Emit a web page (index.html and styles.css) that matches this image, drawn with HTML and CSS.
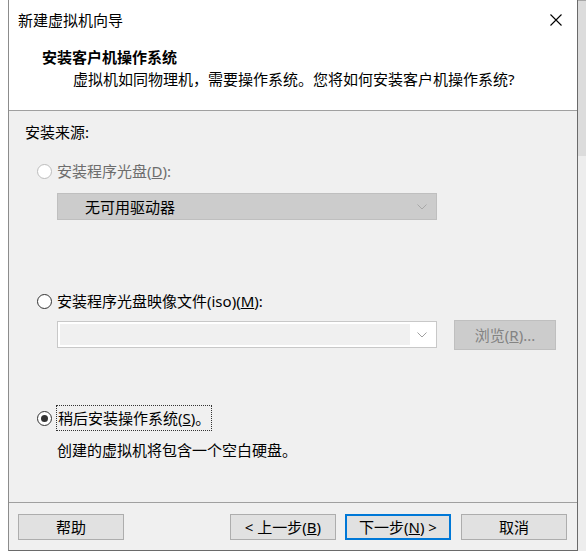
FILE: index.html
```html
<!DOCTYPE html>
<html lang="zh-CN">
<head>
<meta charset="utf-8">
<title>新建虚拟机向导</title>
<link rel="stylesheet" href="styles.css">
</head>
<body>
<div class="screen">
  <div class="window">
    <div class="titlebar">
      <span class="title">新建虚拟机向导</span>
      <span class="close">
        <svg width="12" height="12" viewBox="0 0 12 12"><path d="M0.5 0.5 L11.5 11.5 M11.5 0.5 L0.5 11.5" stroke="#000" stroke-width="1.1" fill="none"/></svg>
      </span>
    </div>
    <div class="header">
      <div class="h-title">安装客户机操作系统</div>
      <div class="h-sub">虚拟机如同物理机，需要操作系统。您将如何安装客户机操作系统?</div>
    </div>
    <div class="content">
      <div class="label">安装来源:</div>
      <div class="radio-row row1 disabled">
        <span class="radio"></span>
        <span class="rtext">安装程序光盘(<u>D</u>):</span>
      </div>
      <div class="combo combo-disabled">
        <span class="combo-text">无可用驱动器</span>
        <span class="chev"><svg width="10" height="6" viewBox="0 0 10 6"><path d="M0.5 0.5 L5 5 L9.5 0.5" stroke="#a8a8a8" fill="none"/></svg></span>
      </div>
      <div class="radio-row row2">
        <span class="radio"></span>
        <span class="rtext">安装程序光盘映像文件(iso)(<u>M</u>):</span>
      </div>
      <div class="iso-row">
        <div class="combo combo-edit">
          <span class="edit-fill"></span>
          <span class="chev"><svg width="10" height="6" viewBox="0 0 10 6"><path d="M0.5 0.5 L5 5 L9.5 0.5" stroke="#a0a0a0" fill="none"/></svg></span>
        </div>
        <div class="browse">浏览(<u>R</u>)...</div>
      </div>
      <div class="radio-row row3">
        <span class="radio checked"></span>
        <span class="rtext focus">稍后安装操作系统(<u>S</u>)。</span>
      </div>
      <div class="note">创建的虚拟机将包含一个空白硬盘。</div>
    </div>
    <div class="footer">
      <div class="btn">帮助</div>
      <div class="spacer"></div>
      <div class="btn">&lt; 上一步(<u>B</u>)</div>
      <div class="btn primary">下一步(<u>N</u>) &gt;</div>
      <div class="btn">取消</div>
    </div>
  </div>
  <div class="backdrop"></div>
</div>
</body>
</html>
```

FILE: styles.css
```css
html, body {
  margin: 0;
  padding: 0;
  background: #ffffff;
}
body {
  width: 586px;
  height: 559px;
  overflow: hidden;
  font-family: "Noto Sans", "Noto Sans CJK SC", sans-serif;
  font-size: 15px;
  color: #000;
}
.screen {
  display: flex;
  padding-left: 8px;
  height: 551px;
}
.window {
  width: 568px;
  height: 550px;
  border-left: 1px solid #8c8c8c;
  border-right: 1px solid #6a6a6a;
  border-bottom: 1px solid #6a6a6a;
  display: flex;
  flex-direction: column;
  background: #f0f0f0;
}
.backdrop {
  flex: 1;
  background: linear-gradient(to bottom, #dcdcdc 0, #dcdcdc 155px, #ededed 155px);
  border-top: 1px solid #a8a8a8;
}
.titlebar {
  height: 40px;
  background: #fff;
  display: flex;
  align-items: center;
  padding-left: 9px;
  padding-right: 15px;
}
.title {
  flex: 1;
  line-height: 20px;
}
.close {
  display: flex;
  align-items: center;
  height: 12px;
}
.header {
  height: 70px;
  background: #fff;
  border-bottom: 1px solid #a0a0a0;
  padding-top: 7px;
  box-sizing: border-box;
  height: 71px;
}
.h-title {
  font-weight: bold;
  line-height: 20px;
  padding-left: 33px;
}
.h-sub {
  line-height: 20px;
  margin-top: 2px;
  padding-left: 64px;
}
.content {
  flex: 1;
  display: flex;
  flex-direction: column;
  align-items: flex-start;
}
.label {
  line-height: 20px;
  margin-top: 11px;
  margin-left: 16px;
}
.radio-row {
  display: flex;
  align-items: center;
  margin-left: 28px;
  height: 20px;
}
.row1 { margin-top: 19px; }
.row2 { margin-top: 71px; }
.row3 { margin-top: 55px; height: 26px; }
.radio {
  width: 13px;
  height: 13px;
  border: 1px solid #333;
  border-radius: 50%;
  background: #fff;
  display: flex;
  align-items: center;
  justify-content: center;
  flex: none;
}
.radio.checked::after {
  content: "";
  width: 7px;
  height: 7px;
  border-radius: 50%;
  background: #333;
}
.rtext {
  margin-left: 5px;
  line-height: 20px;
}
.rtext.focus {
  margin-left: 4px;
  border: 1px dotted #333;
  padding: 1px 1px;
  line-height: 22px;
}
.disabled .radio {
  border-color: #bcbcbc;
}
.disabled .rtext {
  color: #6d6d6d;
}
.combo {
  width: 380px;
  height: 27px;
  box-sizing: border-box;
  margin-left: 48px;
  display: flex;
  align-items: center;
}
.combo-disabled {
  margin-top: 12px;
  background: #cccccc;
  border: 1px solid #bfbfbf;
}
.combo-text {
  flex: 1;
  padding-left: 27px;
  line-height: 20px;
}
.chev {
  width: 24px;
  display: flex;
  justify-content: center;
  padding-right: 2px;
}
.iso-row {
  display: flex;
  align-items: flex-start;
  margin-top: 9px;
}
.combo-edit {
  margin-top: 1px;
  background: #fff;
  border: 1px solid #c8c8c8;
  padding: 2px 0 2px 2px;
  align-items: stretch;
}
.edit-fill {
  flex: 1;
  background: #f0f0f0;
}
.combo-edit .chev {
  align-items: center;
}
.browse {
  margin-left: 17px;
  width: 102px;
  height: 30px;
  box-sizing: border-box;
  background: #cccccc;
  border: 1px solid #bfbfbf;
  color: #838383;
  display: flex;
  align-items: center;
  justify-content: center;
  line-height: 20px;
}
.note {
  margin-top: 9px;
  margin-left: 48px;
  line-height: 20px;
}
.footer {
  height: 48px;
  box-sizing: border-box;
  border-top: 1px solid #a0a0a0;
  padding: 11px 10px 10px 9px;
  display: flex;
  align-items: flex-start;
}
.spacer {
  flex: 1;
}
.btn {
  width: 106px;
  height: 26px;
  box-sizing: border-box;
  background: #e1e1e1;
  border: 1px solid #adadad;
  display: flex;
  align-items: center;
  justify-content: center;
  line-height: 20px;
  margin-left: 9px;
}
.btn:first-child {
  margin-left: 0;
}
.btn.primary {
  border: 2px solid #0078d7;
}
.btn.primary + .btn {
  margin-left: 10px;
}
```
